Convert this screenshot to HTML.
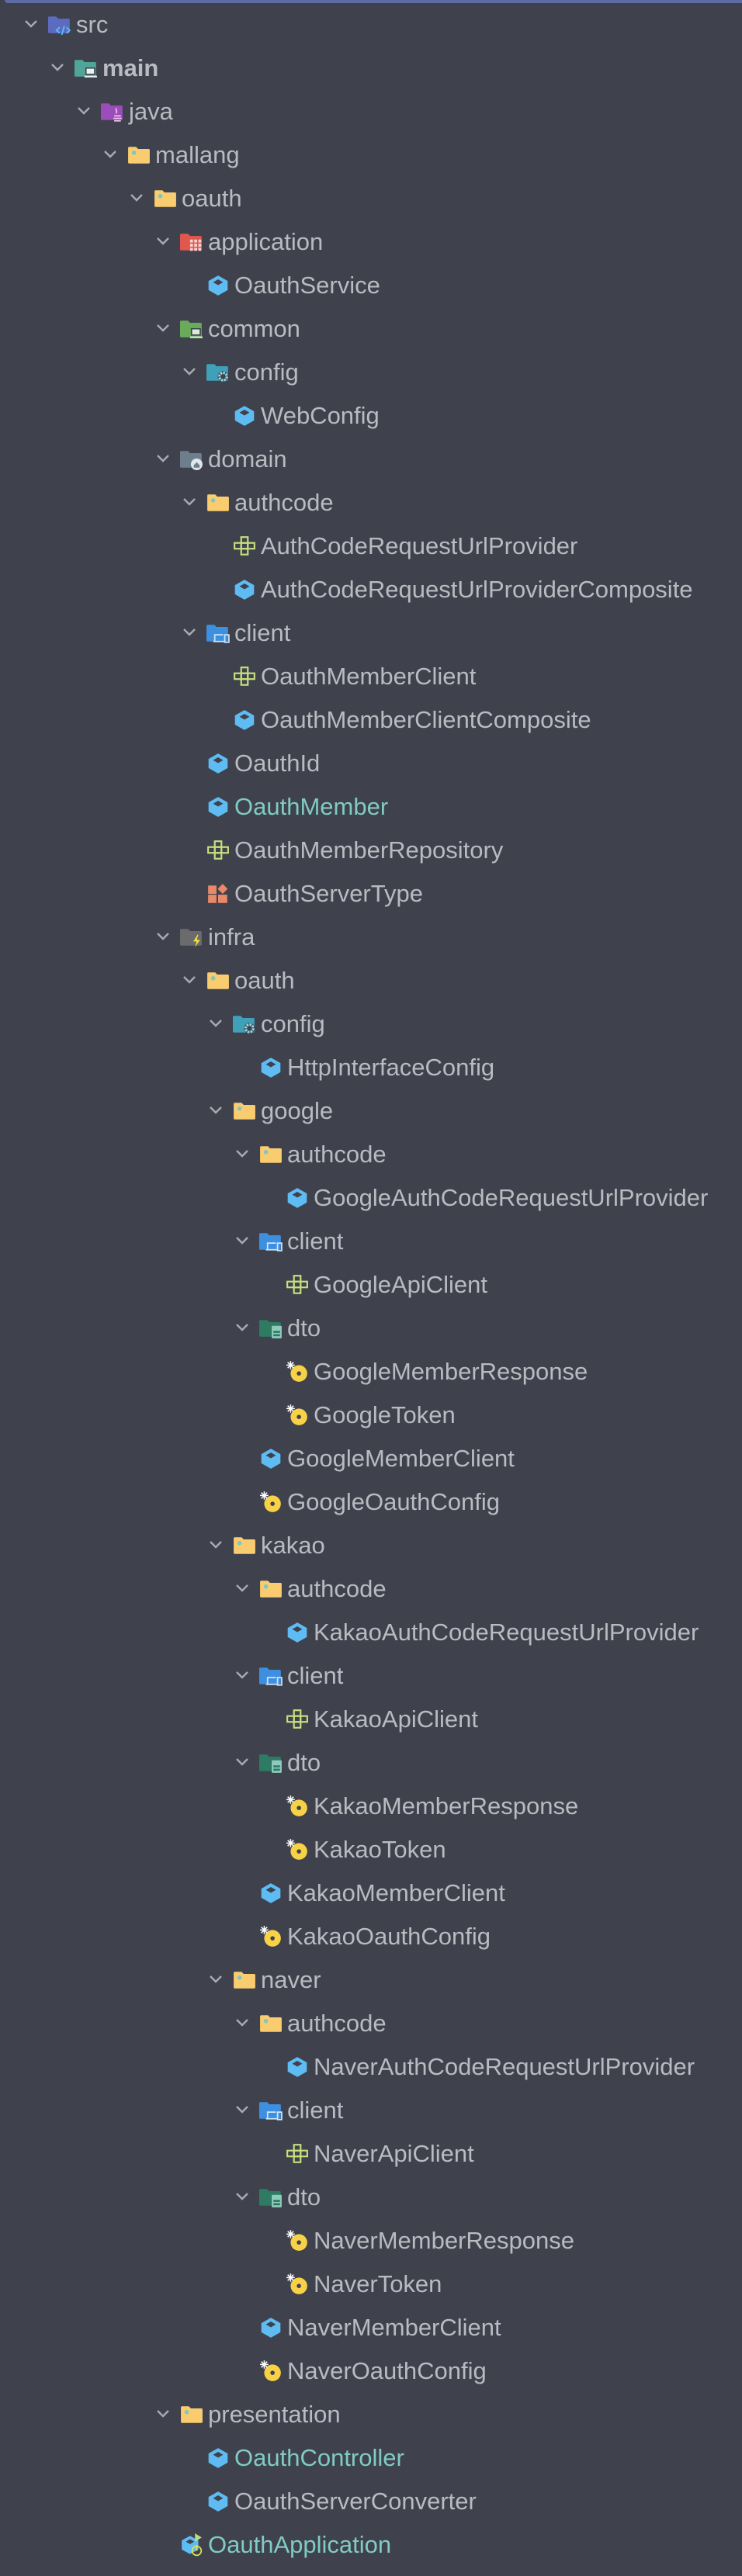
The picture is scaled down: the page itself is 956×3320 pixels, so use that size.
<!DOCTYPE html>
<html><head><meta charset="utf-8">
<style>
html,body{margin:0;padding:0;background:#3f414d;width:956px;height:3320px;overflow:hidden}
body{position:relative;font-family:"Liberation Sans",sans-serif;}
.bar{position:absolute;left:6px;top:0;width:950px;height:4px;background:#5d6ca3;border-radius:0 0 0 4px}
.tree{position:absolute;top:4px;left:0;width:956px}
.row{height:56px;display:flex;align-items:center;position:relative;padding-left:calc(62px + 34px * var(--l));font-size:31px;color:#b9bbc1;white-space:nowrap}
.row svg.i{width:30px;height:30px;flex:none;margin-right:6px}
.row .ch{position:absolute;left:calc(31px + 34px * var(--l));top:20px;width:18px;height:14px}
.row svg use{width:100%;height:100%}
.t{color:#80cbc4}
.b{font-weight:bold}
</style></head><body>
<div class="bar"></div>
<svg width="0" height="0" style="position:absolute">
<defs>
<symbol id="chev" viewBox="0 0 18 14"><path d="M2 3 L9 10 L16 3" fill="none" stroke="#a9abb0" stroke-width="2.4"/></symbol>
<symbol id="fold" viewBox="0 0 28 28"><path d="M1 5.5a1.5 1.5 0 0 1 1.5-1.5h8l2.5 2.5h12.5a1.5 1.5 0 0 1 1.5 1.5v14.5a1.5 1.5 0 0 1-1.5 1.5h-23a1.5 1.5 0 0 1-1.5-1.5z" fill="#f8cc6f"/><circle cx="8" cy="11" r="2.6" fill="#7fc8c2"/></symbol>
<symbol id="src" viewBox="0 0 28 28"><path d="M0 5.5a1.5 1.5 0 0 1 1.5-1.5h8l2.5 2.5h12.5a1.5 1.5 0 0 1 1.5 1.5v14.5a1.5 1.5 0 0 1-1.5 1.5h-23a1.5 1.5 0 0 1-1.5-1.5z" fill="#5c6bc0"/><path d="M14 17l-4 3.5 4 3.5M22 17l4 3.5-4 3.5M19.5 15l-3 11" stroke="#5bb8f5" stroke-width="1.8" fill="none"/></symbol>
<symbol id="main" viewBox="0 0 28 28"><path d="M0 5.5a1.5 1.5 0 0 1 1.5-1.5h8l2.5 2.5h12.5a1.5 1.5 0 0 1 1.5 1.5v14.5a1.5 1.5 0 0 1-1.5 1.5h-23a1.5 1.5 0 0 1-1.5-1.5z" fill="#4fa597"/><rect x="13" y="13" width="12" height="9" fill="#3f414d"/><rect x="14.5" y="14.5" width="9" height="6" fill="#e6f4f2"/><rect x="12" y="23" width="15" height="2" fill="#e6f4f2"/></symbol>
<symbol id="java" viewBox="0 0 28 28"><path d="M0 5.5a1.5 1.5 0 0 1 1.5-1.5h8l2.5 2.5h12.5a1.5 1.5 0 0 1 1.5 1.5v14.5a1.5 1.5 0 0 1-1.5 1.5h-23a1.5 1.5 0 0 1-1.5-1.5z" fill="#9b4dba"/><path d="M19 10c-3 2 2 3-1 6M16 19h8M15 22h10M16 25h8" stroke="#f0c8f0" stroke-width="1.6" fill="none"/></symbol>
<symbol id="app" viewBox="0 0 28 28"><path d="M0 5.5a1.5 1.5 0 0 1 1.5-1.5h8l2.5 2.5h12.5a1.5 1.5 0 0 1 1.5 1.5v14.5a1.5 1.5 0 0 1-1.5 1.5h-23a1.5 1.5 0 0 1-1.5-1.5z" fill="#e0574f"/><g fill="#fbd2cf"><rect x="12" y="11" width="3.5" height="3.5"/><rect x="17" y="11" width="3.5" height="3.5"/><rect x="22" y="11" width="3.5" height="3.5"/><rect x="12" y="16" width="3.5" height="3.5"/><rect x="17" y="16" width="3.5" height="3.5"/><rect x="22" y="16" width="3.5" height="3.5"/><rect x="12" y="21" width="3.5" height="3.5"/><rect x="17" y="21" width="3.5" height="3.5"/><rect x="22" y="21" width="3.5" height="3.5"/></g></symbol>
<symbol id="common" viewBox="0 0 28 28"><path d="M0 5.5a1.5 1.5 0 0 1 1.5-1.5h8l2.5 2.5h12.5a1.5 1.5 0 0 1 1.5 1.5v14.5a1.5 1.5 0 0 1-1.5 1.5h-23a1.5 1.5 0 0 1-1.5-1.5z" fill="#6aab5a"/><rect x="13" y="13" width="12" height="9" fill="#3f414d"/><rect x="14.5" y="14.5" width="9" height="6" fill="#d9efd3"/><rect x="12" y="23" width="15" height="2" fill="#d9efd3"/></symbol>
<symbol id="config" viewBox="0 0 28 28"><path d="M0 5.5a1.5 1.5 0 0 1 1.5-1.5h8l2.5 2.5h12.5a1.5 1.5 0 0 1 1.5 1.5v14.5a1.5 1.5 0 0 1-1.5 1.5h-23a1.5 1.5 0 0 1-1.5-1.5z" fill="#3fa0b8"/><circle cx="20" cy="19" r="6.5" fill="#3f414d"/><circle cx="20" cy="19" r="4.5" fill="none" stroke="#8fdde8" stroke-width="3" stroke-dasharray="2.4 1.1"/></symbol>
<symbol id="domain" viewBox="0 0 28 28"><path d="M0 5.5a1.5 1.5 0 0 1 1.5-1.5h8l2.5 2.5h12.5a1.5 1.5 0 0 1 1.5 1.5v14.5a1.5 1.5 0 0 1-1.5 1.5h-23a1.5 1.5 0 0 1-1.5-1.5z" fill="#6e7e8d"/><circle cx="20" cy="20" r="7" fill="#dfe6ec"/><path d="M16.5 21l3.5-3.5 3.5 3.5v3h-7z" fill="#6e7e8d"/></symbol>
<symbol id="client" viewBox="0 0 28 28"><path d="M0 5.5a1.5 1.5 0 0 1 1.5-1.5h8l2.5 2.5h12.5a1.5 1.5 0 0 1 1.5 1.5v14.5a1.5 1.5 0 0 1-1.5 1.5h-23a1.5 1.5 0 0 1-1.5-1.5z" fill="#3d8fe0"/><path d="M10 24V16h10M8 24h14" stroke="#cfe6fb" stroke-width="1.6" fill="none"/><rect x="22" y="16" width="5" height="9" fill="none" stroke="#cfe6fb" stroke-width="1.6"/></symbol>
<symbol id="infra" viewBox="0 0 28 28"><path d="M0 5.5a1.5 1.5 0 0 1 1.5-1.5h8l2.5 2.5h12.5a1.5 1.5 0 0 1 1.5 1.5v14.5a1.5 1.5 0 0 1-1.5 1.5h-23a1.5 1.5 0 0 1-1.5-1.5z" fill="#6b6b6d"/><path d="M21 11l-5 8h4l-2 7 6-9h-4l2-6z" fill="#f3e33c"/></symbol>
<symbol id="dto" viewBox="0 0 28 28"><path d="M0 5.5a1.5 1.5 0 0 1 1.5-1.5h8l2.5 2.5h12.5a1.5 1.5 0 0 1 1.5 1.5v14.5a1.5 1.5 0 0 1-1.5 1.5h-23a1.5 1.5 0 0 1-1.5-1.5z" fill="#2e7a62"/><rect x="15" y="11" width="12" height="15" rx="1" fill="#8fcbbc"/><rect x="17" y="17" width="8" height="2.5" fill="#2e7a62"/><rect x="17" y="21" width="8" height="2.5" fill="#2e7a62"/></symbol>
<symbol id="cls" viewBox="0 0 28 28"><path d="M14 2l11.5 6.5v11L14 26 2.5 19.5v-11z" fill="#5ebcf3"/><path d="M14 6.5l6 3.5-6 3.5-6-3.5z" fill="#3f414d"/></symbol>
<symbol id="itf" viewBox="0 0 28 28"><g fill="none" stroke="#c8e07c" stroke-width="2"><rect x="10" y="3" width="8" height="7"/><rect x="2" y="10" width="8" height="7"/><rect x="10" y="10" width="8" height="7"/><rect x="18" y="10" width="8" height="7"/><rect x="10" y="17" width="8" height="7"/></g></symbol>
<symbol id="enm" viewBox="0 0 28 28"><g fill="#e8896a"><rect x="2" y="4" width="10" height="10"/><rect x="2" y="15" width="10" height="10"/><rect x="14" y="15" width="11" height="10"/><path d="M19.5 2l6 6-6 6-6-6z"/></g></symbol>
<symbol id="rec" viewBox="0 0 28 28"><circle cx="16" cy="16" r="10" fill="#f7d246"/><circle cx="16" cy="16" r="2.6" fill="#3f414d"/><g stroke="#ffffff" stroke-width="1.4"><path d="M6 1v10M1 6h10M2.5 2.5l7 7M9.5 2.5l-7 7"/></g></symbol>
<symbol id="run" viewBox="0 0 28 28"><path d="M12 3l10 5.5v11L12 25 2 19.5v-11z" fill="#5ebcf3"/><path d="M12 7l5 3-5 3-5-3z" fill="#3f414d"/><path d="M18 0l8 5-8 5z" fill="#b9e07c"/><circle cx="20" cy="21" r="5.5" fill="none" stroke="#e2e24a" stroke-width="1.6"/><path d="M20 14v7" stroke="#e2e24a" stroke-width="1.6"/></symbol>
</defs></svg>
<div class="tree">
<div class="row" style="--l:0"><svg class="ch"><use href="#chev"/></svg><svg class="i"><use href="#src"/></svg>src</div>
<div class="row" style="--l:1"><svg class="ch"><use href="#chev"/></svg><svg class="i"><use href="#main"/></svg><span class="b">main</span></div>
<div class="row" style="--l:2"><svg class="ch"><use href="#chev"/></svg><svg class="i"><use href="#java"/></svg>java</div>
<div class="row" style="--l:3"><svg class="ch"><use href="#chev"/></svg><svg class="i"><use href="#fold"/></svg>mallang</div>
<div class="row" style="--l:4"><svg class="ch"><use href="#chev"/></svg><svg class="i"><use href="#fold"/></svg>oauth</div>
<div class="row" style="--l:5"><svg class="ch"><use href="#chev"/></svg><svg class="i"><use href="#app"/></svg>application</div>
<div class="row" style="--l:6"><svg class="i"><use href="#cls"/></svg>OauthService</div>
<div class="row" style="--l:5"><svg class="ch"><use href="#chev"/></svg><svg class="i"><use href="#common"/></svg>common</div>
<div class="row" style="--l:6"><svg class="ch"><use href="#chev"/></svg><svg class="i"><use href="#config"/></svg>config</div>
<div class="row" style="--l:7"><svg class="i"><use href="#cls"/></svg>WebConfig</div>
<div class="row" style="--l:5"><svg class="ch"><use href="#chev"/></svg><svg class="i"><use href="#domain"/></svg>domain</div>
<div class="row" style="--l:6"><svg class="ch"><use href="#chev"/></svg><svg class="i"><use href="#fold"/></svg>authcode</div>
<div class="row" style="--l:7"><svg class="i"><use href="#itf"/></svg>AuthCodeRequestUrlProvider</div>
<div class="row" style="--l:7"><svg class="i"><use href="#cls"/></svg>AuthCodeRequestUrlProviderComposite</div>
<div class="row" style="--l:6"><svg class="ch"><use href="#chev"/></svg><svg class="i"><use href="#client"/></svg>client</div>
<div class="row" style="--l:7"><svg class="i"><use href="#itf"/></svg>OauthMemberClient</div>
<div class="row" style="--l:7"><svg class="i"><use href="#cls"/></svg>OauthMemberClientComposite</div>
<div class="row" style="--l:6"><svg class="i"><use href="#cls"/></svg>OauthId</div>
<div class="row" style="--l:6"><svg class="i"><use href="#cls"/></svg><span class="t">OauthMember</span></div>
<div class="row" style="--l:6"><svg class="i"><use href="#itf"/></svg>OauthMemberRepository</div>
<div class="row" style="--l:6"><svg class="i"><use href="#enm"/></svg>OauthServerType</div>
<div class="row" style="--l:5"><svg class="ch"><use href="#chev"/></svg><svg class="i"><use href="#infra"/></svg>infra</div>
<div class="row" style="--l:6"><svg class="ch"><use href="#chev"/></svg><svg class="i"><use href="#fold"/></svg>oauth</div>
<div class="row" style="--l:7"><svg class="ch"><use href="#chev"/></svg><svg class="i"><use href="#config"/></svg>config</div>
<div class="row" style="--l:8"><svg class="i"><use href="#cls"/></svg>HttpInterfaceConfig</div>
<div class="row" style="--l:7"><svg class="ch"><use href="#chev"/></svg><svg class="i"><use href="#fold"/></svg>google</div>
<div class="row" style="--l:8"><svg class="ch"><use href="#chev"/></svg><svg class="i"><use href="#fold"/></svg>authcode</div>
<div class="row" style="--l:9"><svg class="i"><use href="#cls"/></svg>GoogleAuthCodeRequestUrlProvider</div>
<div class="row" style="--l:8"><svg class="ch"><use href="#chev"/></svg><svg class="i"><use href="#client"/></svg>client</div>
<div class="row" style="--l:9"><svg class="i"><use href="#itf"/></svg>GoogleApiClient</div>
<div class="row" style="--l:8"><svg class="ch"><use href="#chev"/></svg><svg class="i"><use href="#dto"/></svg>dto</div>
<div class="row" style="--l:9"><svg class="i"><use href="#rec"/></svg>GoogleMemberResponse</div>
<div class="row" style="--l:9"><svg class="i"><use href="#rec"/></svg>GoogleToken</div>
<div class="row" style="--l:8"><svg class="i"><use href="#cls"/></svg>GoogleMemberClient</div>
<div class="row" style="--l:8"><svg class="i"><use href="#rec"/></svg>GoogleOauthConfig</div>
<div class="row" style="--l:7"><svg class="ch"><use href="#chev"/></svg><svg class="i"><use href="#fold"/></svg>kakao</div>
<div class="row" style="--l:8"><svg class="ch"><use href="#chev"/></svg><svg class="i"><use href="#fold"/></svg>authcode</div>
<div class="row" style="--l:9"><svg class="i"><use href="#cls"/></svg>KakaoAuthCodeRequestUrlProvider</div>
<div class="row" style="--l:8"><svg class="ch"><use href="#chev"/></svg><svg class="i"><use href="#client"/></svg>client</div>
<div class="row" style="--l:9"><svg class="i"><use href="#itf"/></svg>KakaoApiClient</div>
<div class="row" style="--l:8"><svg class="ch"><use href="#chev"/></svg><svg class="i"><use href="#dto"/></svg>dto</div>
<div class="row" style="--l:9"><svg class="i"><use href="#rec"/></svg>KakaoMemberResponse</div>
<div class="row" style="--l:9"><svg class="i"><use href="#rec"/></svg>KakaoToken</div>
<div class="row" style="--l:8"><svg class="i"><use href="#cls"/></svg>KakaoMemberClient</div>
<div class="row" style="--l:8"><svg class="i"><use href="#rec"/></svg>KakaoOauthConfig</div>
<div class="row" style="--l:7"><svg class="ch"><use href="#chev"/></svg><svg class="i"><use href="#fold"/></svg>naver</div>
<div class="row" style="--l:8"><svg class="ch"><use href="#chev"/></svg><svg class="i"><use href="#fold"/></svg>authcode</div>
<div class="row" style="--l:9"><svg class="i"><use href="#cls"/></svg>NaverAuthCodeRequestUrlProvider</div>
<div class="row" style="--l:8"><svg class="ch"><use href="#chev"/></svg><svg class="i"><use href="#client"/></svg>client</div>
<div class="row" style="--l:9"><svg class="i"><use href="#itf"/></svg>NaverApiClient</div>
<div class="row" style="--l:8"><svg class="ch"><use href="#chev"/></svg><svg class="i"><use href="#dto"/></svg>dto</div>
<div class="row" style="--l:9"><svg class="i"><use href="#rec"/></svg>NaverMemberResponse</div>
<div class="row" style="--l:9"><svg class="i"><use href="#rec"/></svg>NaverToken</div>
<div class="row" style="--l:8"><svg class="i"><use href="#cls"/></svg>NaverMemberClient</div>
<div class="row" style="--l:8"><svg class="i"><use href="#rec"/></svg>NaverOauthConfig</div>
<div class="row" style="--l:5"><svg class="ch"><use href="#chev"/></svg><svg class="i"><use href="#fold"/></svg>presentation</div>
<div class="row" style="--l:6"><svg class="i"><use href="#cls"/></svg><span class="t">OauthController</span></div>
<div class="row" style="--l:6"><svg class="i"><use href="#cls"/></svg>OauthServerConverter</div>
<div class="row" style="--l:5"><svg class="i"><use href="#run"/></svg><span class="t">OauthApplication</span></div>
</div>
</body></html>
